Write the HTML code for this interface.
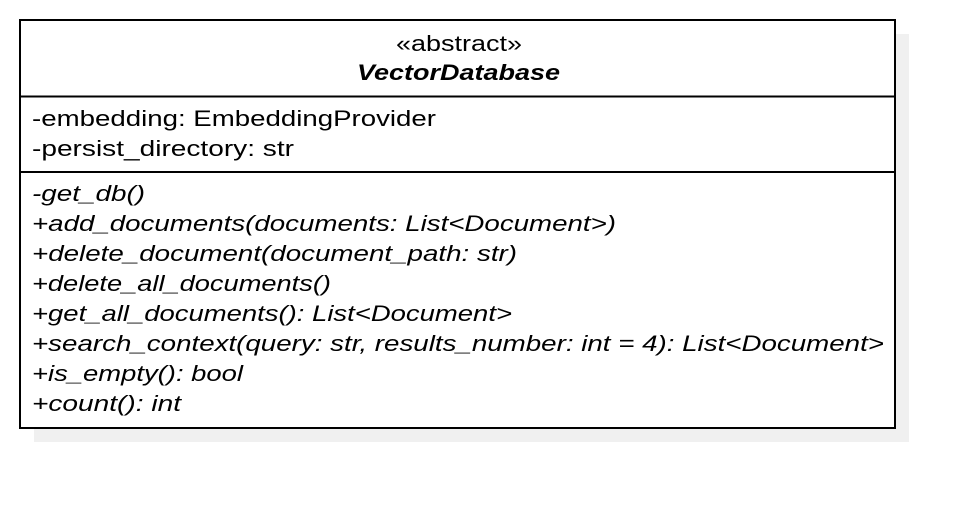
<!DOCTYPE html>
<html><head><meta charset="utf-8"><style>html,body{margin:0;padding:0;background:#fff;width:976px;height:508px;overflow:hidden}</style></head>
<body>
<svg width="976" height="508" xmlns="http://www.w3.org/2000/svg" font-family="Liberation Sans, sans-serif" font-size="22" fill="#000">
<rect x="34" y="34" width="875" height="408" fill="#f0f0f0"/>
<rect x="20" y="20" width="875" height="408" fill="#fff" stroke="#000" stroke-width="2"/>
<line x1="20" y1="96.5" x2="895" y2="96.5" stroke="#000" stroke-width="2"/>
<line x1="20" y1="172" x2="895" y2="172" stroke="#000" stroke-width="2"/>
<text x="396" y="51" textLength="126" lengthAdjust="spacingAndGlyphs">«abstract»</text>
<text x="357" y="80" font-weight="bold" font-style="italic" textLength="203" lengthAdjust="spacingAndGlyphs">VectorDatabase</text>
<text x="32" y="126" textLength="404" lengthAdjust="spacingAndGlyphs">-embedding: EmbeddingProvider</text>
<text x="32" y="156" textLength="262" lengthAdjust="spacingAndGlyphs">-persist_directory: str</text>
<g font-style="italic">
<text x="32" y="201" textLength="113" lengthAdjust="spacingAndGlyphs">-get_db()</text>
<text x="32" y="231" textLength="584" lengthAdjust="spacingAndGlyphs">+add_documents(documents: List&lt;Document&gt;)</text>
<text x="32" y="261" textLength="485" lengthAdjust="spacingAndGlyphs">+delete_document(document_path: str)</text>
<text x="32" y="291" textLength="299" lengthAdjust="spacingAndGlyphs">+delete_all_documents()</text>
<text x="32" y="321" textLength="480" lengthAdjust="spacingAndGlyphs">+get_all_documents(): List&lt;Document&gt;</text>
<text x="32" y="351" textLength="852" lengthAdjust="spacingAndGlyphs">+search_context(query: str, results_number: int = 4): List&lt;Document&gt;</text>
<text x="32" y="381" textLength="211" lengthAdjust="spacingAndGlyphs">+is_empty(): bool</text>
<text x="32" y="411" textLength="149" lengthAdjust="spacingAndGlyphs">+count(): int</text>
</g>
</svg>
</body></html>
